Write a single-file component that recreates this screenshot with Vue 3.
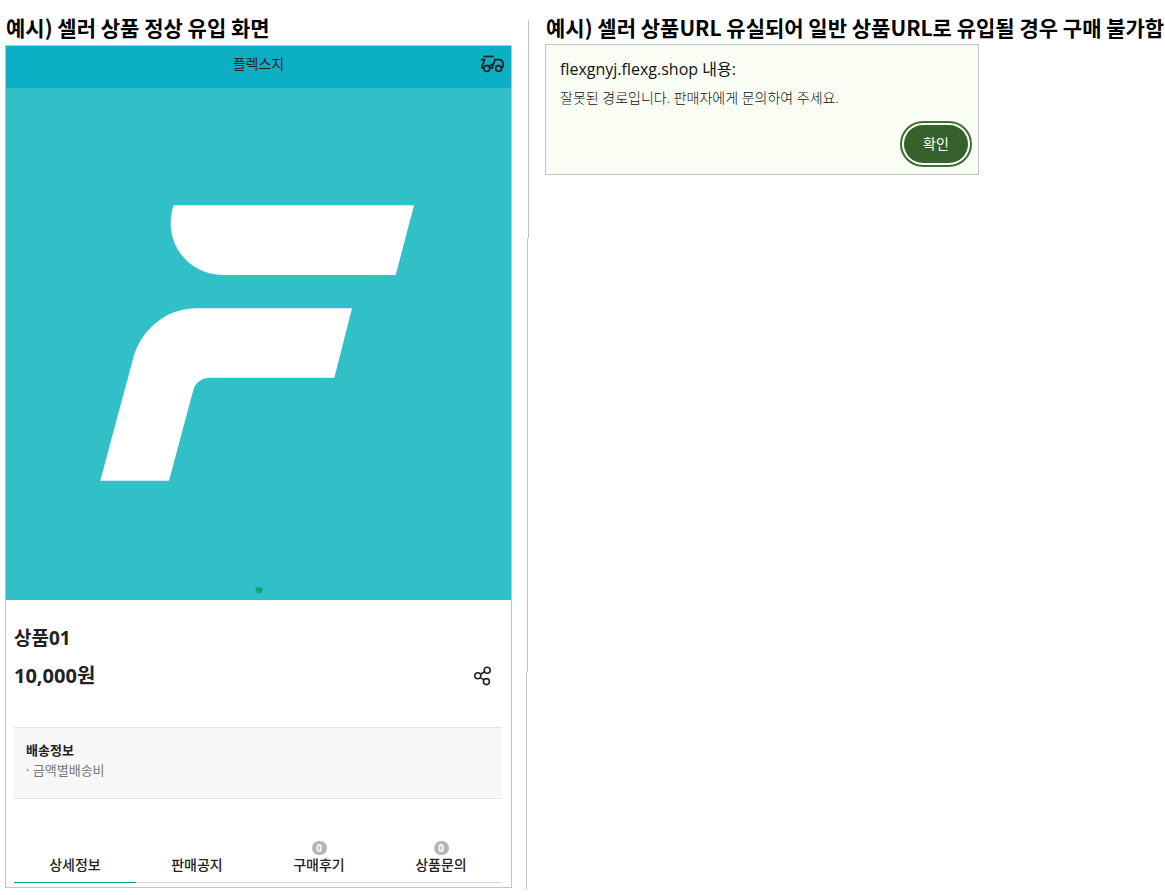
<script setup>
import { ref } from "vue";

const activeTab = ref("detail");

const tabs = [
    { id: "detail", label: "상세정보" },
    { id: "notice", label: "판매공지" },
    { id: "review", label: "구매후기", count: 0 },
    { id: "inquiry", label: "상품문의", count: 0 },
];
</script>

<template>
    <main class="page">
        <section class="example">
            <h2 class="example-title">예시) 셀러 상품 정상 유입 화면</h2>

            <div class="shop">
                <header class="shop-header">
                    <h3 class="shop-name">플렉스지</h3>
                    <a class="delivery-link" href="#delivery" aria-label="배송조회">
                        <svg viewBox="0 0 24 18" width="24" height="18" fill="none" stroke="currentColor" stroke-width="1.7">
                            <path d="M3.2 1.5h10.6" />
                            <path d="M0.8 4.7h3.8L2.2 11v2.2h1.6" />
                            <path d="M9.6 13.2h2.6L15 4.7h3.4c3 0 4.8 2.2 4.8 5.3c0 1.6-0.6 2.6-1.6 3.2" />
                            <path d="M14 9h-1.6l-2.6 2" />
                            <circle cx="6.8" cy="13.6" r="2.9" />
                            <circle cx="18.6" cy="13.6" r="2.9" />
                        </svg>
                    </a>
                </header>

                <div class="hero">
                    <svg class="hero-logo" viewBox="0 0 505 512" role="img" aria-label="플렉스지">
                        <path d="M167.5 117.3H408L389.7 187H217C188 187 164.7 164 164.7 135.5C164.7 129 165.7 123 167.5 117.3Z" />
                        <path d="M190.7 220.3H346L328.3 289.7H204C196 289.7 189.5 294.5 187.3 302L163 392.7H94.3L126.7 272C134.5 241.5 160 220.3 190.7 220.3Z" />
                    </svg>
                    <span class="hero-dot"></span>
                </div>

                <div class="product">
                    <h3 class="product-name">상품01</h3>
                    <div class="price-row">
                        <strong class="price">10,000원</strong>
                        <button class="share" type="button" aria-label="공유">
                            <svg viewBox="0 0 18 20" width="18" height="20" fill="none" stroke="currentColor" stroke-width="1.6">
                                <circle cx="3.8" cy="9.8" r="3" />
                                <circle cx="13.2" cy="4.2" r="3" />
                                <circle cx="12.4" cy="15.6" r="3" />
                                <path d="M6.4 8.2l4.200-2.500M6.200 11.600l3.800 2.300" />
                            </svg>
                        </button>
                    </div>

                    <div class="delivery">
                        <h4 class="delivery-title">배송정보</h4>
                        <p class="delivery-text">· 금액별배송비</p>
                    </div>

                    <nav class="tabs">
                        <button
                            v-for="tab in tabs"
                            :key="tab.id"
                            type="button"
                            class="tab"
                            :class="{ active: tab.id === activeTab }"
                            @click="activeTab = tab.id"
                        >
                            <span v-if="tab.count !== undefined" class="tab-count">{{ tab.count }}</span>
                            {{ tab.label }}
                        </button>
                    </nav>
                </div>
            </div>
        </section>

        <svg class="divider" viewBox="0 0 3 869" preserveAspectRatio="none" aria-hidden="true">
            <path d="M2.5 0V218M1.5 218V652M0.5 652V869" />
        </svg>

        <section class="example">
            <h2 class="example-title">예시) 셀러 상품URL 유실되어 일반 상품URL로 유입될 경우 구매 불가함</h2>

            <div class="alert" role="alertdialog" aria-labelledby="alert-title" aria-describedby="alert-text">
                <h3 id="alert-title" class="alert-title">flexgnyj.flexg.shop 내용:</h3>
                <p id="alert-text" class="alert-text">잘못된 경로입니다. 판매자에게 문의하여 주세요.</p>
                <button class="alert-confirm" type="button">확인</button>
            </div>
        </section>
    </main>
</template>

<style>
body {
    margin: 0;
    background: #fff;
}
</style>

<style scoped>
.page {
    display: grid;
    grid-template-columns: minmax(0, 521fr) 3px minmax(0, 636fr);
    padding: 13px 0 6px 5px;
    font-family: "Open Sans", "Noto Sans CJK KR", sans-serif;
    color: #222;
}

h2,
h3,
h4,
p {
    margin: 0;
}

button {
    padding: 0;
    border: 0;
    background: none;
    font: inherit;
    color: inherit;
    cursor: pointer;
}

svg {
    display: block;
}

.example {
    min-width: 0;
}

.example:first-child {
    margin-right: 14px;
}

.example:last-child {
    margin-left: 16px;
}

.example-title {
    padding: 0 1px 3px;
    font-family: "Noto Sans CJK KR", sans-serif;
    font-size: 21px;
    line-height: 28px;
    font-weight: 700;
    color: #000;
    white-space: nowrap;
}

/* Écran boutique */
.shop {
    margin-top: 1px;
    border: 1px solid #c3c3c3;
}

.shop-header {
    display: grid;
    grid-template-columns: 31px 1fr 31px;
    align-items: center;
    box-sizing: border-box;
    height: 42px;
    padding-bottom: 6px;
    background: #0cafc4;
}

.shop-name {
    grid-column: 2;
    font-size: 14px;
    line-height: 20px;
    font-weight: 400;
    text-align: center;
}

.delivery-link {
    color: #222;
}

.hero {
    position: relative;
    background: #32c0c8;
}

.hero-logo {
    width: 100%;
    height: auto;
    fill: #fff;
}

.hero-dot {
    position: absolute;
    bottom: 7px;
    left: 50%;
    width: 7px;
    height: 6px;
    border-radius: 50%;
    background: #00a880;
    transform: translateX(-50%);
}

.product {
    padding: 24px 9px 4px 8px;
}

.product-name {
    font-size: 19px;
    line-height: 28px;
    font-weight: 700;
}

.price-row {
    display: flex;
    align-items: center;
    justify-content: space-between;
    margin-top: 8px;
    padding-right: 10px;
}

.price {
    font-size: 20px;
    line-height: 32px;
    font-weight: 700;
}

.delivery {
    margin-top: 35px;
    padding: 12px 12px 18px;
    border-top: 1px solid #e5e5e5;
    border-bottom: 1px solid #e5e5e5;
    background: #f7f7f7;
    font-size: 13px;
    line-height: 20px;
}

.delivery-title {
    font-size: 13px;
    font-weight: 600;
}

.delivery-text {
    color: #777;
}

.tabs {
    display: flex;
    margin-top: 40px;
}

.tab {
    display: flex;
    flex: 1;
    flex-direction: column;
    align-items: center;
    justify-content: flex-end;
    height: 44px;
    padding-bottom: 7px;
    border-bottom: 1px solid #d5d5d5;
    font-size: 14px;
    line-height: 20px;
    font-weight: 500;
}

.tab.active {
    border-bottom-color: #00a880;
}

.tab-count {
    width: 15px;
    height: 14px;
    border-radius: 7px;
    background: #b5b5b5;
    font-size: 10px;
    line-height: 14px;
    font-weight: 700;
    text-align: center;
    color: #fff;
}

.divider {
    width: 3px;
    height: calc(100% - 7px);
    margin-top: 7px;
    fill: none;
    stroke: #c3c3c3;
    stroke-width: 1;
}

/* Fenêtre d'alerte */
.alert {
    display: flex;
    flex-direction: column;
    max-width: 408px;
    padding: 12px 10px 11px 14px;
    border: 1px solid #c3c3c3;
    background: #fafdf4;
    color: #111;
}

.alert-title {
    font-size: 16px;
    line-height: 24px;
    font-weight: 400;
}

.alert-text {
    margin-top: 7px;
    font-size: 14px;
    line-height: 20px;
    font-weight: 300;
}

.alert-confirm {
    align-self: flex-end;
    width: 64px;
    height: 38px;
    margin-top: 17px;
    border-radius: 19px;
    background: #36602c;
    outline: 2px solid #3c6e35;
    outline-offset: 2px;
    font-size: 14px;
    line-height: 20px;
    color: #fff;
}
</style>
